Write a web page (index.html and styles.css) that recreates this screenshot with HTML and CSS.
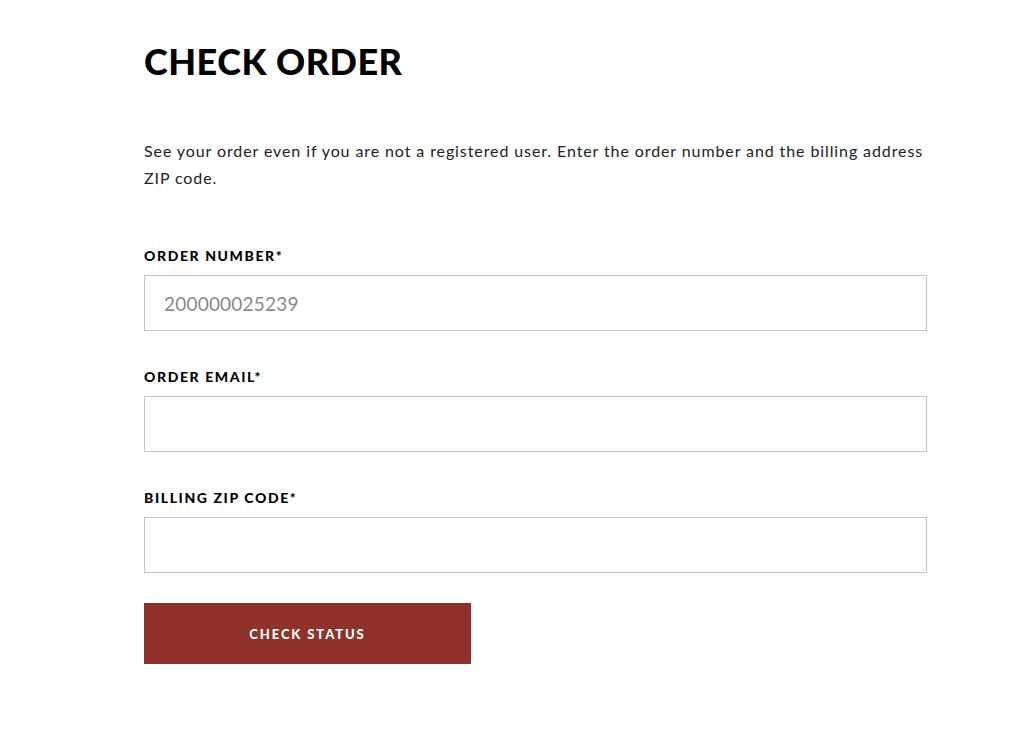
FILE: index.html
```html
<!DOCTYPE html>
<html>
<head>
    <title>Check Order</title>
    <link rel="stylesheet" href="styles.css">
</head>
<body>
    <div class="container">
        <h1>CHECK ORDER</h1>
        <p class="intro">See your order even if you are not a registered user. Enter the order number and the billing address ZIP code.</p>

        <form class="order-form">
            <div class="field">
                <label for="orderNumber">ORDER NUMBER*</label>
                <input id="orderNumber" type="text" placeholder="200000025239">
            </div>
            <div class="field">
                <label for="orderEmail">ORDER EMAIL*</label>
                <input id="orderEmail" type="email">
            </div>
            <div class="field">
                <label for="billingZip">BILLING ZIP CODE*</label>
                <input id="billingZip" type="text">
            </div>
            <button type="button" class="submit-btn">CHECK STATUS</button>
        </form>
    </div>
</body>
</html>
```

FILE: styles.css
```css
body {
    font-family: 'Lato', 'Liberation Sans', sans-serif;
    margin: 0;
    padding: 0;
    background-color: #fff;
    color: #111;
}

.container {
    width: 783px;
    margin-left: 144px;
    padding-top: 38px;
}

h1 {
    font-size: 36px;
    line-height: 46px;
    font-weight: 900;
    letter-spacing: 0.5px;
    margin: 0 0 53px;
    color: #000;
}

.intro {
    font-size: 16px;
    line-height: 27px;
    letter-spacing: 0.9px;
    margin: 0 0 56px;
    color: #222;
}

.order-form {
    display: flex;
    flex-direction: column;
}

.field {
    display: flex;
    flex-direction: column;
    margin-bottom: 37px;
}

.field:last-of-type {
    margin-bottom: 30px;
}

label {
    font-size: 14px;
    line-height: 18px;
    font-weight: 900;
    letter-spacing: 1.6px;
    margin-bottom: 10px;
    color: #000;
}

input {
    box-sizing: border-box;
    height: 56px;
    width: 100%;
    border: 1px solid #c6c6c6;
    padding: 0 19px;
    font-family: inherit;
    font-size: 19px;
    letter-spacing: 0.2px;
    color: #333;
    outline: none;
}

input::placeholder {
    color: #8a8a8a;
}

.submit-btn {
    width: 327px;
    height: 61px;
    border: none;
    background: #8f322c;
    color: #fff;
    font-family: inherit;
    font-size: 13px;
    font-weight: 900;
    letter-spacing: 1.9px;
    cursor: pointer;
}
```
